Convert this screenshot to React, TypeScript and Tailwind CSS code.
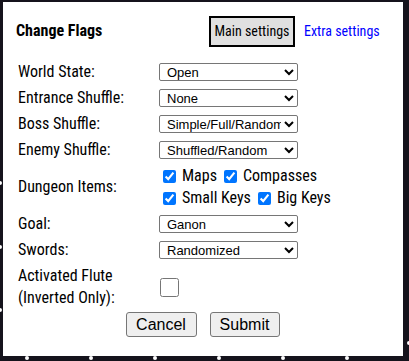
import React from "react";

const labelFont = {
  fontFamily: '"Roboto Condensed", "Liberation Sans Narrow", "DejaVu Sans Condensed", Roboto, sans-serif',
};

const Select = ({ value, options }: { value: string; options: string[] }) => (
  <select
    defaultValue={value}
    className="w-[139px] h-[18px] border border-[#767676] rounded-[2px] bg-white pl-[3px] text-[13px] leading-none text-black font-['Liberation_Sans',Arial,sans-serif]"
  >
    {options.map((o) => (
      <option key={o}>{o}</option>
    ))}
  </select>
);

const Check = ({ label, checked }: { label: string; checked: boolean }) => (
  <label className="flex items-center gap-[6px]">
    <input type="checkbox" defaultChecked={checked} className="w-[13px] h-[13px]" />
    <span>{label}</span>
  </label>
);

const rows = [
  { label: "World State:", value: "Open" },
  { label: "Entrance Shuffle:", value: "None" },
  { label: "Boss Shuffle:", value: "Simple/Full/Random" },
  { label: "Enemy Shuffle:", value: "Shuffled/Random" },
];

export default function App() {
  return (
    <div className="relative w-[409px] h-[361px] overflow-hidden bg-[#15131c] pl-[3px] pt-[2px]">
      <div
        className="w-[400px] h-[354px] bg-white pt-[13px] text-black text-[16px]"
        style={labelFont}
      >
        <div className="flex items-center h-[31px] pl-[13px] pt-[1px]">
          <h2 className="font-bold text-[16px] text-black w-[193px]">Change Flags</h2>
          <button className="h-[31px] w-[86px] border-2 border-black bg-[#e0e0e0] text-[14px] text-black">
            Main settings
          </button>
          <a className="ml-[9px] text-[14px] text-[#0000ff]">Extra settings</a>
        </div>

        <div className="mt-[13px] pl-[15px] grid grid-cols-[141px_1fr]">
          {rows.map((r) => (
            <React.Fragment key={r.label}>
              <div className="h-[26px] flex items-center">{r.label}</div>
              <div className="h-[26px] flex items-center">
                <Select value={r.value} options={[r.value]} />
              </div>
            </React.Fragment>
          ))}

          <div className="h-[48px] flex items-center">Dungeon Items:</div>
          <div className="h-[48px] flex flex-col justify-center gap-[1px] pl-[4px]">
            <div className="flex items-center gap-[7px] h-[21px]">
              <Check label="Maps" checked />
              <Check label="Compasses" checked />
            </div>
            <div className="flex items-center gap-[7px] h-[21px]">
              <Check label="Small Keys" checked />
              <Check label="Big Keys" checked />
            </div>
          </div>

          <div className="h-[26px] flex items-center">Goal:</div>
          <div className="h-[26px] flex items-center">
            <Select value="Ganon" options={["Ganon"]} />
          </div>

          <div className="h-[26px] flex items-center">Swords:</div>
          <div className="h-[26px] flex items-center">
            <Select value="Randomized" options={["Randomized"]} />
          </div>

          <div className="h-[48px] flex flex-col justify-center leading-[22px]">
            <span>Activated Flute</span>
            <span>(Inverted Only):</span>
          </div>
          <div className="h-[48px] flex items-center pl-[1px]">
            <input type="checkbox" className="w-[19px] h-[19px]" />
          </div>
        </div>

        <div className="flex justify-center gap-[13px] mt-[1px] pr-[1px] font-['Liberation_Sans',Arial,sans-serif]">
          <button className="h-[25px] w-[71px] border border-[#767676] rounded-[3px] bg-[#efefef] text-[16px] text-black">
            Cancel
          </button>
          <button className="h-[25px] w-[70px] border border-[#767676] rounded-[3px] bg-[#efefef] text-[16px] text-black">
            Submit
          </button>
        </div>
      </div>

      <div className="absolute left-0 right-0 bottom-[1px] flex pl-[25px] gap-[60px]">
        {[0, 1, 2, 3, 4, 5].map((i) => (
          <span key={i} className="w-[4px] h-[4px] rounded-full bg-white" />
        ))}
      </div>
      <div className="absolute left-[-2px] top-[181px] w-[4px] h-[4px] rounded-full bg-white" />
      <div className="absolute left-[-2px] top-[245px] w-[4px] h-[4px] rounded-full bg-white" />
      <div className="absolute left-[-2px] top-[308px] w-[4px] h-[4px] rounded-full bg-white" />
      <div className="absolute right-[-2px] top-[341px] w-[4px] h-[4px] rounded-full bg-white" />
    </div>
  );
}
